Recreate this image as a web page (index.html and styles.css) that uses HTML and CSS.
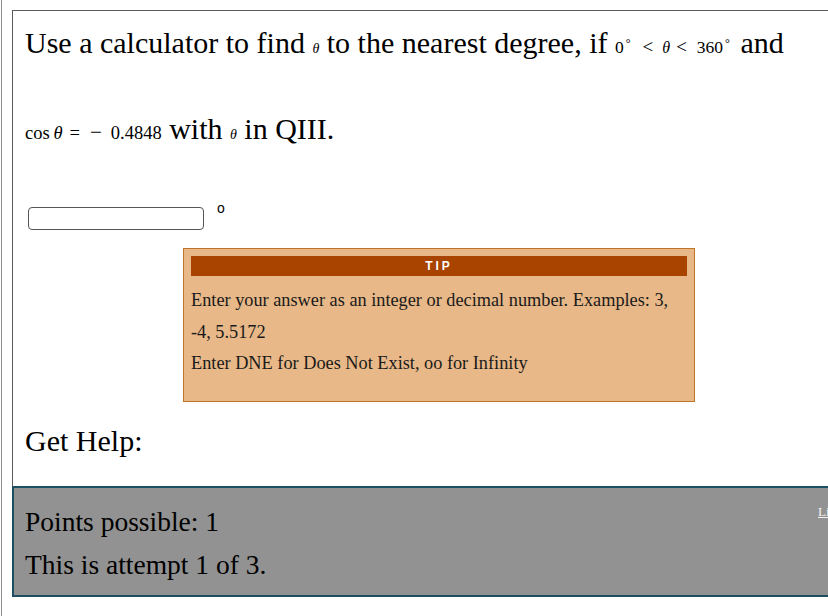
FILE: index.html
```html
<!DOCTYPE html>
<html>
<head>
<meta charset="utf-8">
<link rel="stylesheet" href="styles.css">
</head>
<body>
<div class="frame">
  <div class="question">
    <p class="prompt">Use a calculator to find <span class="m-theta">θ</span> to the nearest degree, if <span class="m-ineq"><span class="num">0</span><sup>°</sup><span class="lt lt-a">&lt;</span><i>θ</i><span class="lt lt-b">&lt;</span><span class="num">360</span><sup>°</sup></span> and<br><span class="m-eq">cos&thinsp;<i>θ</i><span class="eq">=</span><span class="minus">−</span>0.4848</span> with <span class="m-theta">θ</span> in QIII.</p>
    <div class="answer">
      <input class="answer-input" type="text">
      <span class="deg">o</span>
    </div>
    <div class="tip">
      <div class="tip-title">TIP</div>
      <div class="tip-body">
        <div>Enter your answer as an integer or decimal number. Examples: 3,</div>
        <div>-4, 5.5172</div>
        <div>Enter DNE for Does Not Exist, oo for Infinity</div>
      </div>
    </div>
    <p class="help">Get Help:</p>
  </div>
  <div class="status">
    <div class="status-text">
      <div>Points possible: 1</div>
      <div>This is attempt 1 of 3.</div>
    </div>
    <a class="license" href="#">License</a>
  </div>
</div>
</body>
</html>
```
FILE: styles.css
```css
html, body {
  margin: 0;
  padding: 0;
  background: #fff;
  overflow: hidden;
}
body {
  font-family: "Liberation Serif", "Times New Roman", serif;
  color: #000;
  width: 828px;
  height: 616px;
}
.frame {
  margin-left: 1px;
  border-left: 1px solid #8c8c8c;
  height: 616px;
  box-sizing: border-box;
  padding: 10px 0 0 10px;
  overflow: hidden;
}
.question {
  border-top: 1px solid #5a5a5a;
  border-left: 1px solid #5a5a5a;
  padding: 0 0 0 12px;
  height: 476px;
  box-sizing: border-box;
}
.prompt {
  margin: -11px 0 0 0;
  font-size: 30px;
  line-height: 86px;
  white-space: nowrap;
}
.m-theta {
  font-style: italic;
  font-size: 14px;
  line-height: 1;
}
.m-ineq {
  font-size: 17px;
  line-height: 1;
  margin-left: 0;
  margin-right: 3px;
}
.m-ineq sup {
  font-size: 12px;
  vertical-align: 6px;
  line-height: 0;
  margin-left: 2px;
}
.m-ineq i {
  font-size: 16px;
}
.m-ineq .num {
  font-size: 17.5px;
}
.m-ineq .lt {
  font-size: 19px;
}
.m-ineq .lt-a {
  margin: 0 9px 0 12px;
}
.m-ineq .lt-b {
  margin: 0 10px 0 6px;
}
.m-eq {
  font-size: 18.5px;
  line-height: 1;
}
.m-eq .eq {
  margin: 0 10px 0 7px;
}
.m-eq .minus {
  font-size: 21px;
  margin: 0 9px 0 0;
}
.answer {
  display: flex;
  align-items: flex-start;
  margin-top: 35px;
  margin-left: 3px;
  height: 23px;
}
.answer-input {
  width: 176px;
  height: 23px;
  box-sizing: border-box;
  border: 1px solid #555;
  border-radius: 4px;
  margin: 0;
  padding: 0;
  background: #fff;
}
.deg {
  font-family: "Liberation Sans", sans-serif;
  font-size: 14px;
  line-height: 14px;
  margin-left: 13px;
  margin-top: -6px;
}
.tip {
  margin: 18px 0 0 158px;
  width: 512px;
  height: 154px;
  box-sizing: border-box;
  background: #e8b888;
  border: 1px solid #c07526;
  padding: 7px;
}
.tip-title {
  background: #a84400;
  color: #fff;
  font-family: "Liberation Sans", sans-serif;
  font-weight: bold;
  font-size: 12px;
  letter-spacing: 3px;
  text-align: center;
  height: 20px;
  line-height: 20px;
}
.tip-body {
  font-size: 18.3px;
  line-height: 31.5px;
  color: #1a1a1a;
  margin-top: 9px;
}
.help {
  margin: 22px 0 0 0;
  font-size: 30px;
  line-height: 34px;
}
.status {
  display: grid;
  grid-template-columns: 793px auto;
  width: 1000px;
  height: 111px;
  box-sizing: border-box;
  background: #929292;
  border: 2px solid #1d4f63;
  padding: 12px 0 0 11px;
}
.status-text {
  font-size: 27.5px;
  line-height: 43px;
}
.license {
  color: #f2f2f2;
  font-size: 13px;
  line-height: 16px;
  text-decoration: underline;
  margin-top: 4px;
}
```
